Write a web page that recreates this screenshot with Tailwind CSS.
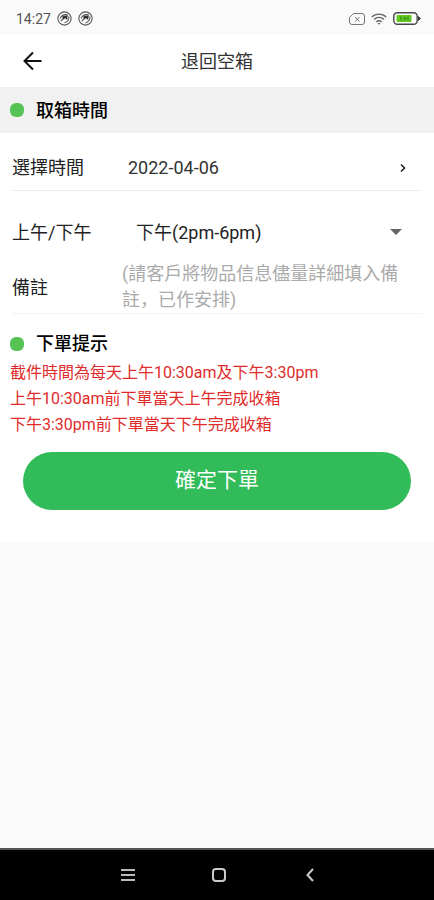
<!DOCTYPE html>
<html lang="zh">
<head>
<meta charset="utf-8">
<meta name="viewport" content="width=device-width, initial-scale=1">
<title>退回空箱</title>
<script src="https://cdn.jsdelivr.net/npm/@tailwindcss/browser@4"></script>
</head>
<body class="flex min-h-screen flex-col bg-[#fafafa] font-[Roboto,'Noto_Sans_CJK_SC',sans-serif] text-[#222]">

  <!-- Status bar -->
  <div class="flex h-[35px] items-center justify-between bg-[#fafafa] pt-[2px] pr-[13px] pl-4 text-[#555]">
    <div class="flex items-center gap-[6px]">
      <span class="text-sm">14:27</span>
      <svg class="size-[15px]" viewBox="0 0 14 14" fill="none" stroke="#555"><circle cx="7" cy="7" r="6.200"/><path d="M3 7C4 4 6.500 3 10 3.500M11 5c.5 3-1 5.500-4 6M3.500 9.500 6 7"/><path d="M5 5 10 4 9.500 8.500 7.500 6.800 5.500 8Z" fill="#333" stroke="none"/></svg>
      <svg class="size-[15px]" viewBox="0 0 14 14" fill="none" stroke="#555"><circle cx="7" cy="7" r="6.200"/><path d="M3 7C4 4 6.500 3 10 3.500M11 5c.5 3-1 5.500-4 6M3.500 9.500 6 7"/><path d="M5 5 10 4 9.500 8.500 7.500 6.800 5.500 8Z" fill="#333" stroke="none"/></svg>
    </div>
    <div class="flex items-center gap-[6px]">
      <svg class="h-3 w-4" viewBox="0 0 16 12" fill="none" stroke="#777"><path d="M4.500.5H13A2.500 2.500 0 0 1 15.500 3v6A2.500 2.500 0 0 1 13 11.500H3A2.500 2.500 0 0 1 .5 9V4.500Z"/><path d="m6 4 4.500 4.500M10.500 4 6 8.500"/></svg>
      <svg class="h-3 w-4" viewBox="0 0 16 12" fill="none" stroke="#666" stroke-width="1.300"><path d="M.7 4a10.500 10.500 0 0 1 14.600 0M3 6.500a7 7 0 0 1 10 0M5.300 9a4 4 0 0 1 5.400 0"/><path d="M6.500 10h3L8 11.800Z" fill="#666" stroke="none"/></svg>
      <svg class="h-[13px] w-7" viewBox="0 0 28 13"><rect x=".8" y=".8" width="23.400" height="11.400" rx="3.500" fill="#fff" stroke="#444" stroke-width="1.400"/><path d="M25.500 4.500 27.500 6.500 25.500 8.500Z" fill="#444" stroke="#444"/><rect x="3.500" y="3" width="15" height="7" rx="1" fill="#5fc91f"/><path d="M8 4.500v4M11.500 4.500v4M12 6.500h2M15 4.500v4" stroke="#3f9a1c" stroke-width="1.500"/></svg>
    </div>
  </div>

  <!-- App bar -->
  <header class="grid h-[52px] grid-cols-[48px_1fr_48px] items-center bg-white px-2">
    <button type="button" aria-label="返回" class="flex size-12 items-center justify-center">
      <svg class="size-5" viewBox="0 0 20 20" fill="none" stroke="#111" stroke-width="2"><path d="M19.500 10H3M11 1.500 2.500 10l8.500 8.500"/></svg>
    </button>
    <h1 class="text-center text-[18px] text-[#333]">退回空箱</h1>
  </header>

  <main class="grow">
    <form class="bg-white pb-[33px]">
      <div class="flex h-[46px] items-center gap-3 bg-[#f1f1f1] px-[10px]">
        <span class="size-[14px] rounded-[6px] bg-[#54c354]"></span>
        <h2 class="text-[18px] font-medium text-black">取箱時間</h2>
      </div>

      <div class="mx-3 flex h-[58px] items-center border-b border-[#eee] pt-3">
        <label for="date" class="w-[116px] text-[18px]">選擇時間</label>
        <button id="date" type="button" class="flex grow items-center justify-between pr-4 text-left text-[18px] text-[#333]">
          2022-04-06
          <svg class="h-[10px] w-[6px]" viewBox="0 0 6 10" fill="none" stroke="#222" stroke-width="1.600"><path d="m1 1.500 3.500 3.500L1 8.500"/></svg>
        </button>
      </div>

      <div class="mx-3 flex h-[70px] items-center pt-3">
        <label for="period" class="w-[124px] text-[18px]">上午/下午</label>
        <div class="grid grow items-center">
          <select id="period" class="col-start-1 row-start-1 appearance-none bg-transparent text-[18px]">
            <option>下午(2pm-6pm)</option>
            <option>上午(10am-1pm)</option>
          </select>
          <svg class="pointer-events-none col-start-1 row-start-1 mr-5 h-[6px] w-[12px] justify-self-end" viewBox="0 0 12 6"><path d="M0 0h12L6 6Z" fill="#666"/></svg>
        </div>
      </div>

      <div class="mx-3 flex items-center border-b border-[#f4f4f4]">
        <label for="note" class="w-[110px] shrink-0 text-[18px]">備註</label>
        <textarea id="note" rows="2" class="block grow resize-none overflow-hidden pr-3 text-[18px] leading-[26px] placeholder:text-[#aaa]" placeholder="(請客戶將物品信息儘量詳細填入備註，已作安排)"></textarea>
      </div>

      <div class="flex items-center gap-3 px-[10px] pt-4">
        <span class="size-[14px] rounded-[6px] bg-[#54c354]"></span>
        <h2 class="text-[18px] leading-[28px] font-medium text-black">下單提示</h2>
      </div>
      <div class="px-[10px] pt-[2px] text-[16px] leading-[26px] text-[#e02b2b]">
        <p>截件時間為每天上午10:30am及下午3:30pm</p>
        <p>上午10:30am前下單當天上午完成收箱</p>
        <p>下午3:30pm前下單當天下午完成收箱</p>
      </div>
      <div class="px-[23px] pt-[14px]">
        <button type="submit" class="h-[58px] w-full rounded-full bg-[#31bb59] text-[21px] text-white">確定下單</button>
      </div>
    </form>
  </main>

  <!-- System navigation -->
  <nav aria-label="系統導覽" class="grid h-[52px] grid-cols-[1fr_91px_91px_91px_1fr] items-center border-t-2 border-[#555] bg-black pl-1">
    <button type="button" aria-label="最近" class="col-start-2 flex h-12 items-center justify-center">
      <svg class="size-[14px]" viewBox="0 0 14 14" stroke="#bbb" stroke-width="2"><path d="M0 2h14M0 7h14M0 12h14"/></svg>
    </button>
    <button type="button" aria-label="主畫面" class="flex h-12 items-center justify-center">
      <svg class="size-4" viewBox="0 0 16 16" fill="none" stroke="#ccc" stroke-width="2"><rect x="2" y="2" width="12" height="12" rx="3"/></svg>
    </button>
    <button type="button" aria-label="返回上一頁" class="flex h-12 items-center justify-center">
      <svg class="h-[14px] w-2" viewBox="0 0 8 14" fill="none" stroke="#ccc" stroke-width="2"><path d="M7 1 1.500 7 7 13"/></svg>
    </button>
  </nav>
</body>
</html>
